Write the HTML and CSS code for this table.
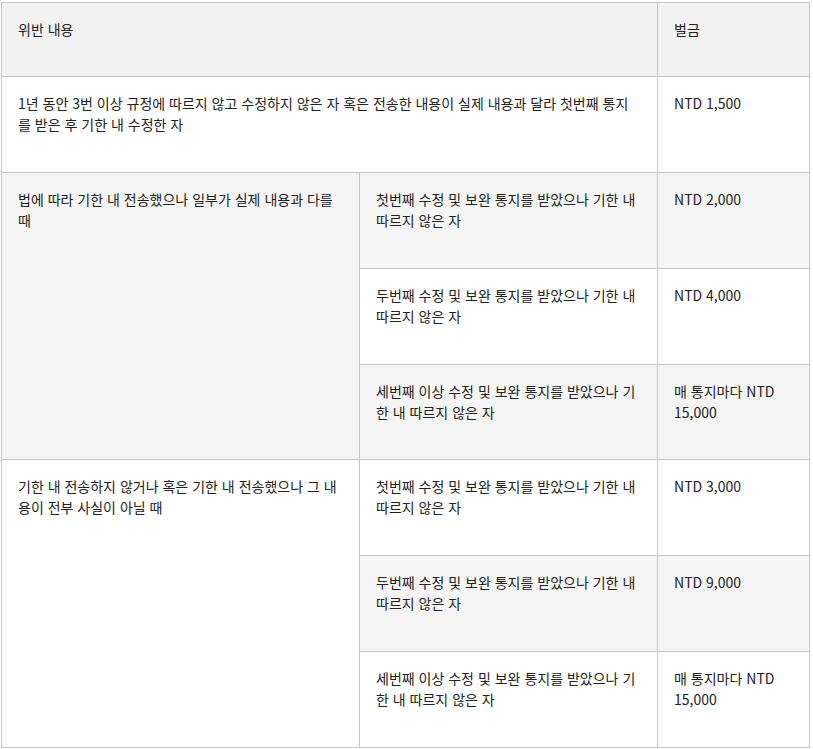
FILE: index.html
```html
<!DOCTYPE html>
<html lang="ko">
<head>
<meta charset="utf-8">
<link rel="stylesheet" href="styles.css">
</head>
<body>
<table class="fines">
  <colgroup>
    <col class="c1"><col class="c2"><col class="c3">
  </colgroup>
  <thead>
    <tr><th colspan="2">위반 내용</th><th>벌금</th></tr>
  </thead>
  <tbody>
    <tr><td colspan="2">1년 동안 3번 이상 규정에 따르지 않고 수정하지 않은 자 혹은 전송한 내용이 실제 내용과 달라 첫번째 통지를 받은 후 기한 내 수정한 자</td><td>NTD 1,500</td></tr>
    <tr><td rowspan="3">법에 따라 기한 내 전송했으나 일부가 실제 내용과 다를 때</td><td>첫번째 수정 및 보완 통지를 받았으나 기한 내 따르지 않은 자</td><td>NTD 2,000</td></tr>
    <tr><td>두번째 수정 및 보완 통지를 받았으나 기한 내 따르지 않은 자</td><td>NTD 4,000</td></tr>
    <tr class="short"><td>세번째 이상 수정 및 보완 통지를 받았으나 기한 내 따르지 않은 자</td><td>매 통지마다 NTD 15,000</td></tr>
    <tr><td rowspan="3">기한 내 전송하지 않거나 혹은 기한 내 전송했으나 그 내용이 전부 사실이 아닐 때</td><td>첫번째 수정 및 보완 통지를 받았으나 기한 내 따르지 않은 자</td><td>NTD 3,000</td></tr>
    <tr><td>두번째 수정 및 보완 통지를 받았으나 기한 내 따르지 않은 자</td><td>NTD 9,000</td></tr>
    <tr><td>세번째 이상 수정 및 보완 통지를 받았으나 기한 내 따르지 않은 자</td><td>매 통지마다 NTD 15,000</td></tr>
  </tbody>
</table>
</body>
</html>
```
FILE: styles.css
```css
html, body {
  margin: 0;
  background: #fff;
}
body {
  padding: 2px 0 0 1px;
  font-family: "Noto Sans CJK KR", "Noto Sans", sans-serif;
  font-size: 14px;
  line-height: 21px;
  color: #222;
}
.fines {
  border-collapse: collapse;
  table-layout: fixed;
  width: 808px;
}
.c1 { width: 358px; }
.c2 { width: 298px; }
.c3 { width: 152px; }
.fines th,
.fines td {
  border: 1px solid #c6c6c6;
  padding: 16px 16px 37px;
  text-align: left;
  vertical-align: top;
  font-weight: 400;
  height: 42px;
}
.fines thead th {
  background: #f2f2f2;
  padding-bottom: 36px;
  height: 21px;
}
.fines tbody tr.short td {
  padding-bottom: 36px;
}
.fines tbody tr:nth-child(even) td {
  background: #f5f5f5;
}
.fines tbody tr:nth-child(odd) td {
  background: #fff;
}
```
